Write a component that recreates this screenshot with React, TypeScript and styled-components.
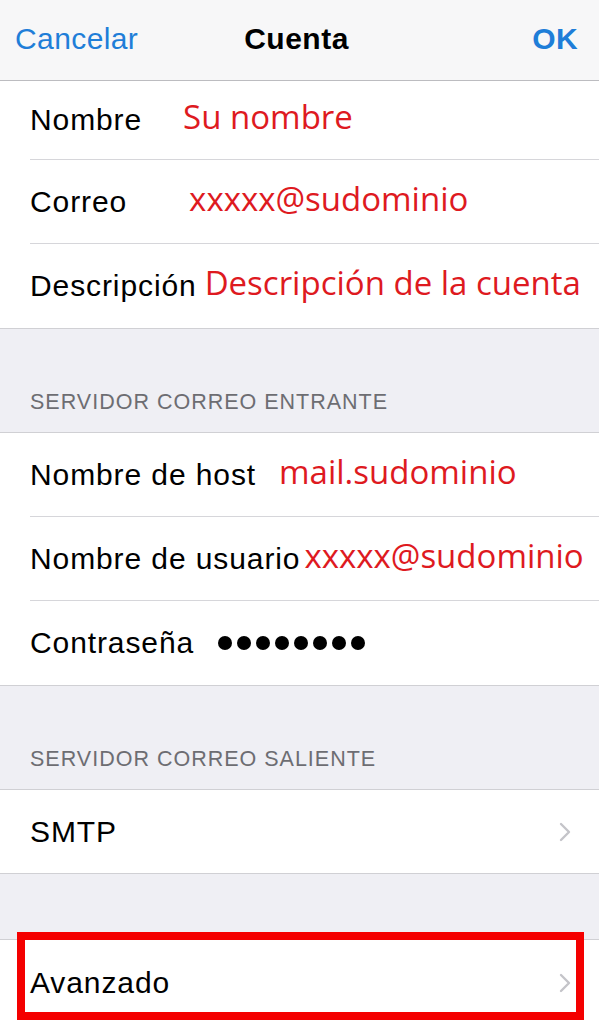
import React from 'react';
import styled, { createGlobalStyle } from 'styled-components';

const GlobalStyle = createGlobalStyle`
  html, body {
    margin: 0;
    padding: 0;
    background: #efeff4;
  }
  body {
    font-family: "Liberation Sans", Arial, sans-serif;
    -webkit-font-smoothing: antialiased;
  }
`;

interface Field {
  label: string;
  value?: string;
  gap: number;
  secret?: boolean;
  height?: number;
}

const accountFields: Field[] = [
  { label: 'Nombre', value: 'Su nombre', gap: 41, height: 79 },
  { label: 'Correo', value: 'xxxxx@sudominio', gap: 62 },
  { label: 'Descripción', value: 'Descripción de la cuenta', gap: 8 },
];

const incomingFields: Field[] = [
  { label: 'Nombre de host', value: 'mail.sudominio', gap: 23 },
  { label: 'Nombre de usuario', value: 'xxxxx@sudominio', gap: 4 },
  { label: 'Contraseña', gap: 24, secret: true },
];

function App() {
  return (
    <>
      <GlobalStyle />
      <Screen>
        <NavBar>
          <NavButton>Cancelar</NavButton>
          <NavTitle>Cuenta</NavTitle>
          <NavButton $bold $end>OK</NavButton>
        </NavBar>

        <Group $noTop>
          {accountFields.map((f, i) => (
            <FieldRow key={f.label} field={f} last={i === accountFields.length - 1} />
          ))}
        </Group>

        <SectionHeader>Servidor correo entrante</SectionHeader>
        <Group>
          {incomingFields.map((f, i) => (
            <FieldRow key={f.label} field={f} last={i === incomingFields.length - 1} />
          ))}
        </Group>

        <SectionHeader>Servidor correo saliente</SectionHeader>
        <Group>
          <Row $height={83}>
            <RowBody $last>
              <Label>SMTP</Label>
              <Chevron />
            </RowBody>
          </Row>
        </Group>

        <Spacer />
        <Group>
          <Row $height={85}>
            <RowBody $last>
              <Label>Avanzado</Label>
              <Chevron />
            </RowBody>
            <Highlight />
          </Row>
        </Group>
      </Screen>
    </>
  );
}

function FieldRow({ field, last }: { field: Field; last: boolean }) {
  return (
    <Row $height={field.height ?? 84}>
      <RowBody $last={last}>
        <Label>{field.label}</Label>
        {field.secret ? (
          <Dots $gap={field.gap}>
            {Array.from({ length: 8 }).map((_, i) => <Dot key={i} />)}
          </Dots>
        ) : (
          <Value $gap={field.gap}>{field.value}</Value>
        )}
      </RowBody>
    </Row>
  );
}

function Chevron() {
  return (
    <ChevronIcon width="12" height="20" viewBox="0 0 12 20">
      <path d="M2 2 L10 10 L2 18" fill="none" stroke="#c4c4c9" strokeWidth="2.4" strokeLinecap="round" strokeLinejoin="round" />
    </ChevronIcon>
  );
}

export default App;

const Screen = styled.div`
  width: 599px;
  height: 1024px;
  overflow: hidden;
  background: #efeff4;
`;

const NavBar = styled.div`
  box-sizing: border-box;
  height: 81px;
  display: grid;
  grid-template-columns: 1fr auto 1fr;
  align-items: center;
  padding: 0 21px 2px 15px;
  background: #f7f7f8;
  border-bottom: 1px solid #bcbcc0;
`;

const NavButton = styled.span<{ $bold?: boolean; $end?: boolean }>`
  font-size: 30px;
  color: #1f7ed8;
  font-weight: ${(p) => (p.$bold ? 700 : 400)};
  justify-self: ${(p) => (p.$end ? 'end' : 'start')};
  letter-spacing: 0.4px;
`;

const NavTitle = styled.span`
  font-size: 30px;
  font-weight: 700;
  color: #000;
  letter-spacing: 0.5px;
`;

const Group = styled.div<{ $noTop?: boolean }>`
  background: #fff;
  border-top: ${(p) => (p.$noTop ? 'none' : '1px solid #d0d0d4')};
  border-bottom: 1px solid #d0d0d4;
`;

const Row = styled.div<{ $height: number }>`
  position: relative;
  box-sizing: border-box;
  height: ${(p) => p.$height}px;
  padding-left: 30px;
  display: flex;
`;

const RowBody = styled.div<{ $last?: boolean }>`
  flex: 1;
  display: flex;
  align-items: center;
  padding-right: 27px;
  border-bottom: ${(p) => (p.$last ? 'none' : '1px solid #d6d6da')};
`;

const Label = styled.span`
  font-size: 30px;
  color: #000;
  letter-spacing: 0.9px;
  white-space: nowrap;
`;

const Value = styled.span<{ $gap: number }>`
  margin-left: ${(p) => p.$gap}px;
  margin-top: -7px;
  font-family: "Open Sans", "Noto Sans", sans-serif;
  font-size: 33px;
  color: #de1a1f;
  white-space: nowrap;
`;

const Dots = styled.div<{ $gap: number }>`
  display: flex;
  gap: 5px;
  margin-left: ${(p) => p.$gap}px;
`;

const Dot = styled.span`
  width: 14px;
  height: 14px;
  border-radius: 50%;
  background: #000;
`;

const ChevronIcon = styled.svg`
  margin-left: auto;
  margin-right: 1px;
`;

const SectionHeader = styled.div`
  height: 103px;
  box-sizing: border-box;
  display: flex;
  align-items: flex-end;
  padding: 0 30px 17px;
  font-size: 21.5px;
  color: #6d6d72;
  text-transform: uppercase;
  letter-spacing: 1px;
`;

const Spacer = styled.div`
  height: 65px;
`;

const Highlight = styled.div`
  position: absolute;
  left: 17px;
  top: -8px;
  width: 567px;
  height: 88px;
  box-sizing: border-box;
  border: 8px solid #f40000;
  pointer-events: none;
`;
